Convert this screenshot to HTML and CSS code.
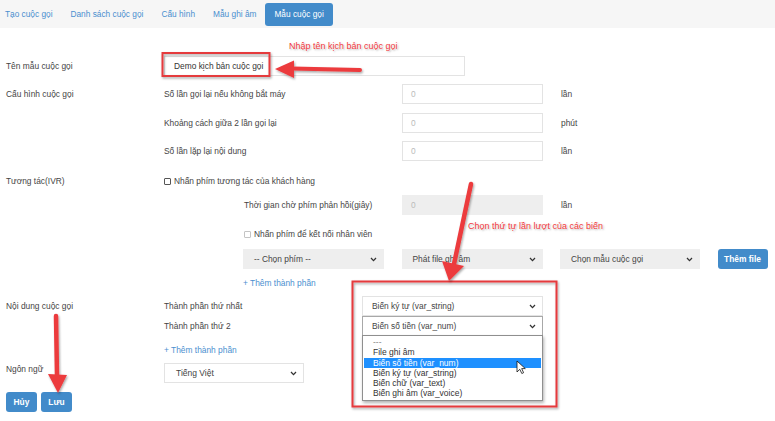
FILE: index.html
```html
<!DOCTYPE html>
<html lang="vi">
<head>
  <meta charset="UTF-8" />
  <meta name="viewport" content="width=device-width, initial-scale=1.0"/>
  <title>Mẫu cuộc gọi</title>
  <link rel="stylesheet" href="styles.css">
</head>
<body>
<div class="page">

  <nav class="tabs">
    <a class="tab">Tạo cuộc gọi</a>
    <a class="tab">Danh sách cuộc gọi</a>
    <a class="tab">Cấu hình</a>
    <a class="tab">Mẫu ghi âm</a>
    <a class="tab active">Mẫu cuộc gọi</a>
  </nav>

  <div class="template-form">

    <!-- Tên mẫu -->
    <div class="form-row">
      <div class="row-label">Tên mẫu cuộc gọi</div>
      <div class="input input-name">Demo kịch bản cuộc gọi</div>
    </div>

    <!-- Cấu hình -->
    <div class="form-row row-config">
      <div class="row-label">Cấu hình cuộc gọi</div>
      <div class="row-body">
        <div class="sub-row">
          <div class="sub-label">Số lần gọi lại nếu không bắt máy</div>
          <div class="input input-num placeholder">0</div>
          <div class="unit">lần</div>
        </div>
        <div class="sub-row">
          <div class="sub-label">Khoảng cách giữa 2 lần gọi lại</div>
          <div class="input input-num placeholder">0</div>
          <div class="unit">phút</div>
        </div>
        <div class="sub-row">
          <div class="sub-label">Số lần lặp lại nội dung</div>
          <div class="input input-num placeholder">0</div>
          <div class="unit">lần</div>
        </div>
      </div>
    </div>

    <!-- IVR -->
    <div class="form-row row-ivr">
      <div class="row-label">Tương tác(IVR)</div>
      <div class="row-body">
        <div class="check-row"><span class="checkbox"></span>Nhấn phím tương tác của khách hàng</div>
        <div class="ivr-inner">
          <div class="sub-row wait-row">
            <div class="sub-label">Thời gian chờ phím phản hồi(giây)</div>
            <div class="input input-num disabled placeholder">0</div>
            <div class="unit">lần</div>
          </div>
          <div class="check-row check-staff"><span class="checkbox disabled"></span>Nhấn phím để kết nối nhân viên</div>
          <div class="select-row">
            <div class="select gray w141"><span>-- Chọn phím --</span><svg class="chev" width="7" height="5" viewBox="0 0 7 5"><polyline points="1,1 3.5,3.6 6,1"/></svg></div>
            <div class="select gray w141"><span>Phát file ghi âm</span><svg class="chev" width="7" height="5" viewBox="0 0 7 5"><polyline points="1,1 3.5,3.6 6,1"/></svg></div>
            <div class="select gray w140"><span>Chọn mẫu cuộc gọi</span><svg class="chev" width="7" height="5" viewBox="0 0 7 5"><polyline points="1,1 3.5,3.6 6,1"/></svg></div>
            <div class="btn btn-file">Thêm file</div>
          </div>
          <div class="add-link">+ Thêm thành phần</div>
        </div>
      </div>
    </div>

    <!-- Nội dung -->
    <div class="form-row row-content">
      <div class="row-label">Nội dung cuộc gọi</div>
      <div class="row-body">
        <div class="sub-row">
          <div class="sub-label wide">Thành phần thứ nhất</div>
          <div class="select w181"><span>Biến ký tự (var_string)</span><svg class="chev" width="7" height="5" viewBox="0 0 7 5"><polyline points="1,1 3.5,3.6 6,1"/></svg></div>
        </div>
        <div class="sub-row">
          <div class="sub-label wide">Thành phần thứ 2</div>
          <div class="select-wrap">
            <div class="select focused w181"><span>Biến số tiền (var_num)</span><svg class="chev" width="7" height="5" viewBox="0 0 7 5"><polyline points="1,1 3.5,3.6 6,1"/></svg></div>
            <div class="dropdown">
              <div class="dropdown-item muted">---</div>
              <div class="dropdown-item">File ghi âm</div>
              <div class="dropdown-item selected">Biến số tiền (var_num)</div>
              <div class="dropdown-item">Biến ký tự (var_string)</div>
              <div class="dropdown-item">Biến chữ (var_text)</div>
              <div class="dropdown-item">Biến ghi âm (var_voice)</div>
            </div>
          </div>
        </div>
        <div class="add-link">+ Thêm thành phần</div>
      </div>
    </div>

    <!-- Ngôn ngữ -->
    <div class="form-row row-lang">
      <div class="row-label lang-label">Ngôn ngữ</div>
      <div class="select w140 lang-select"><span>Tiếng Việt</span><svg class="chev" width="7" height="5" viewBox="0 0 7 5"><polyline points="1,1 3.5,3.6 6,1"/></svg></div>
    </div>

    <div class="actions">
      <div class="btn">Hủy</div>
      <div class="btn">Lưu</div>
    </div>
  </div>

  <!-- chú thích -->
  <svg class="marks" width="775" height="421" viewBox="0 0 775 421">
    <defs>
      <filter id="shadow" x="-20%" y="-20%" width="140%" height="140%">
        <feDropShadow dx="1" dy="1.5" stdDeviation="1.2" flood-color="#000" flood-opacity="0.35"/>
      </filter>
    </defs>
    <g filter="url(#shadow)">
      <rect x="162.5" y="53" width="107" height="23" fill="none" stroke="#e53a3d" stroke-width="2"/>
      <rect x="352.5" y="281.5" width="204" height="125" fill="none" stroke="#e53a3d" stroke-width="2"/>
    </g>
    <g filter="url(#shadow)" fill="#ec3a3e" stroke="#ec3a3e">
      <line x1="292" y1="68.5" x2="360" y2="70" stroke-width="4" stroke-linecap="round"/>
      <polygon points="275,69 294,60.5 294,78" stroke="none"/>
      <line x1="471" y1="184" x2="454" y2="264" stroke-width="4.5" stroke-linecap="round"/>
      <polygon points="449,281 442,261 464,266" stroke="none"/>
      <line x1="56" y1="316" x2="57" y2="376" stroke-width="4.5" stroke-linecap="round"/>
      <polygon points="58,393 48,374 67,375" stroke="none"/>
    </g>
    <path class="cursor" d="M0 0 L0 11 L2.8 8.3 L4.8 12.5 L6.6 11.7 L4.7 7.6 L8.3 7.6 Z" transform="translate(517 361)"/>
  </svg>
  <div class="note note-name">Nhập tên kịch bản cuộc gọi</div>
  <div class="note note-vars">Chọn thứ tự lần lượt của các biến</div>

</div>
</body>
</html>
```

FILE: styles.css
```css
* {
  box-sizing: border-box;
}

body {
  margin: 0;
  font-family: 'Liberation Sans', Arial, sans-serif;
  font-size: 8.4px;
  color: #444;
  background-color: #fff;
}

.page {
  position: relative;
  width: 775px;
  height: 421px;
  overflow: hidden;
}

/* tabs */
.tabs {
  display: flex;
  align-items: center;
  height: 28px;
  background-color: #f6f6f6;
}

.tab {
  padding: 0 9px;
  line-height: 23px;
  font-size: 8.3px;
  color: #4a8fcf;
  border-radius: 3px;
}

.tab:first-child {
  padding-left: 5px;
}

.tab.active {
  background-color: #428bca;
  color: #fff;
}

/* form */
.template-form {
  padding: 28px 0 0 6px;
}

.form-row {
  display: flex;
  align-items: flex-start;
}

.row-label {
  width: 158px;
  flex: none;
  line-height: 20px;
}

.row-body {
  flex: 1;
}

.input {
  height: 20px;
  line-height: 18px;
  padding: 0 8px;
  border: 1px solid #e3e3e3;
  background-color: #fff;
  color: #333;
}

.input-name {
  width: 301px;
  padding-left: 9px;
}

.input-num {
  width: 141px;
  flex: none;
}

.placeholder {
  color: #bbb;
}

.input.disabled {
  background-color: #eee;
  border-color: #eee;
}

.sub-row {
  display: flex;
  align-items: center;
  height: 20px;
}

.sub-label {
  width: 238px;
  flex: none;
}

.sub-label.wide {
  width: 198px;
}

.unit {
  margin-left: 18px;
}

.row-config {
  margin-top: 8px;
}

.row-config .sub-row + .sub-row {
  margin-top: 8.5px;
}

.row-ivr {
  margin-top: 10px;
}

.check-row {
  display: flex;
  align-items: center;
  height: 20px;
}

.checkbox {
  width: 7px;
  height: 7px;
  margin-right: 3px;
  border: 1px solid #555;
  border-radius: 1px;
  background-color: #fff;
}

.checkbox.disabled {
  border-color: #c4c4c4;
}

.ivr-inner {
  padding-left: 79px;
}

.ivr-inner .sub-label {
  width: 159px;
  padding-left: 1px;
}

.wait-row {
  margin-top: 4px;
}

.check-staff {
  margin-top: 9px;
  padding-left: 1px;
}

.select-row {
  display: flex;
  gap: 17.5px;
  margin-top: 5px;
}

.select {
  display: flex;
  align-items: center;
  justify-content: space-between;
  height: 20px;
  padding: 0 6px 0 10px;
  border: 1px solid #e3e3e3;
  background-color: #fff;
  color: #444;
  flex: none;
}

.select.gray {
  background-color: #eee;
  border-color: #eee;
}

.select.focused {
  border-color: #a8a8a8;
}

.w140 { width: 140px; }
.w141 { width: 141px; }
.w181 { width: 181px; padding-left: 9px; }

.chev {
  fill: none;
  stroke: #333;
  stroke-width: 1.3;
}

.btn {
  height: 20px;
  line-height: 20px;
  padding: 0 7.5px;
  border-radius: 3px;
  background-color: #428bca;
  color: #fff;
  font-weight: bold;
}

.btn-file {
  width: 50px;
  padding: 0;
  text-align: center;
}

.add-link {
  margin-top: 7px;
  line-height: 14px;
  color: #4a8fcf;
}

.row-content {
  margin-top: 6px;
}

.select-wrap {
  position: relative;
}

.dropdown {
  position: absolute;
  left: 0;
  top: 19px;
  width: 181px;
  padding: 1px 1px;
  border: 1px solid #8f8f8f;
  background-color: #fff;
  box-shadow: 1px 2px 3px rgba(0, 0, 0, 0.3);
  z-index: 5;
}

.dropdown-item {
  line-height: 10.3px;
  padding-left: 9px;
  font-size: 8.5px;
  color: #333;
}

.dropdown-item.muted {
  color: #888;
}

.dropdown-item.selected {
  background-color: #1e90ff;
  color: #fff;
}

.row-lang {
  margin-top: 6px;
}

.lang-label {
  line-height: 12px;
}

.lang-select {
  padding-left: 11px;
  font-size: 8.5px;
}

.actions {
  display: flex;
  gap: 4px;
  margin-top: 9px;
}

/* chú thích */
.marks {
  position: absolute;
  left: 0;
  top: 0;
  pointer-events: none;
  z-index: 10;
}

.cursor {
  fill: #fff;
  stroke: #111;
  stroke-width: 0.8;
}

.note {
  position: absolute;
  z-index: 11;
  white-space: nowrap;
  font-size: 9px;
  color: #f2383c;
  text-shadow: 0 0 2px #fff, 0 0 2px #fff, 1px 1px 2px rgba(0, 0, 0, 0.35);
}

.note-name {
  left: 289px;
  top: 41px;
}

.note-vars {
  left: 468px;
  top: 221px;
}
```
